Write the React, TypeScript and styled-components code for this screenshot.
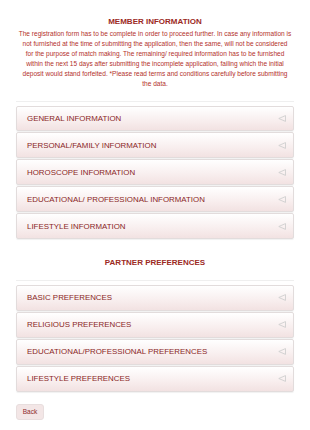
import React from 'react';
import styled, {createGlobalStyle} from 'styled-components';

const GlobalStyle = createGlobalStyle`
    html, body {
        margin: 0;
        padding: 0;
        background: #ffffff;
        font-family: "Liberation Sans", Arial, sans-serif;
    }
`;

const memberSections = [
    'GENERAL INFORMATION',
    'PERSONAL/FAMILY INFORMATION',
    'HOROSCOPE INFORMATION',
    'EDUCATIONAL/ PROFESSIONAL INFORMATION',
    'LIFESTYLE INFORMATION',
];

const partnerSections = [
    'BASIC PREFERENCES',
    'RELIGIOUS PREFERENCES',
    'EDUCATIONAL/PROFESSIONAL PREFERENCES',
    'LIFESTYLE PREFERENCES',
];

const Arrow: React.FC = () => (
    <ArrowIcon width="8" height="7" viewBox="0 0 8 7">
        <path d="M7.5 0.6 L0.8 3.5 L7.5 6.4 Z" fill="none" stroke="#cfcfcf" strokeWidth="0.9" strokeLinejoin="round"/>
    </ArrowIcon>
);

const App: React.FC = () => {
    return (
        <Page>
            <GlobalStyle/>
            <SectionTitle>MEMBER INFORMATION</SectionTitle>
            <Notice>
                The registration form has to be complete in order to proceed further. In case any information is<br/>
                not furnished at the time of submitting the application, then the same, will not be considered<br/>
                for the purpose of match making. The remaining/ required information has to be furnished<br/>
                within the next 15 days after submitting the incomplete application, failing which the initial<br/>
                deposit would stand forfeited. *Please read terms and conditions carefully before submitting<br/>
                the data.
            </Notice>
            <Divider $top={11}/>
            <List>
                {memberSections.map((name) => (
                    <Item key={name}>
                        <Label>{name}</Label>
                        <Arrow/>
                    </Item>
                ))}
            </List>

            <SectionTitle $top={19}>PARTNER PREFERENCES</SectionTitle>
            <Divider $top={12}/>
            <List>
                {partnerSections.map((name) => (
                    <Item key={name}>
                        <Label>{name}</Label>
                        <Arrow/>
                    </Item>
                ))}
            </List>

            <BackButton>Back</BackButton>
        </Page>
    );
};

const Page = styled.div`
    width: 310px;
    box-sizing: border-box;
    padding: 0 16px 12px;
`;

const SectionTitle = styled.h2<{ $top?: number }>`
    margin: ${(p) => p.$top ?? 17}px 0 0;
    font-size: 8px;
    line-height: 10px;
    font-weight: bold;
    color: #9c2a24;
    text-align: center;
`;

const Notice = styled.p`
    margin: 2px 0 0;
    font-size: 6.55px;
    line-height: 10.1px;
    color: #b3322c;
    text-align: center;
    white-space: nowrap;
`;

const Divider = styled.div<{ $top: number }>`
    margin-top: ${(p) => p.$top}px;
    height: 1px;
    background: #efefef;
`;

const List = styled.div`
    margin-top: 4px;
    display: flex;
    flex-direction: column;
    gap: 1px;
`;

const Item = styled.div`
    height: 25.9px;
    box-sizing: border-box;
    display: flex;
    align-items: center;
    justify-content: space-between;
    padding: 0 7px 0 10px;
    border: 1px solid #e2dcdc;
    border-radius: 2px;
    background: linear-gradient(to bottom, #ffffff 0%, #f8eeee 60%, #f2e2e2 100%);
    box-shadow: 0 1px 1px rgba(0, 0, 0, 0.06);
`;

const Label = styled.span`
    font-size: 7.9px;
    color: #8a2626;
    white-space: nowrap;
`;

const ArrowIcon = styled.svg`
    display: block;
    flex-shrink: 0;
`;

const BackButton = styled.button`
    display: block;
    margin-top: 12px;
    width: 28px;
    height: 16px;
    padding: 0;
    border: 1px solid #e8dede;
    border-radius: 3px;
    background: #f3e6e6;
    font-family: "Liberation Sans", Arial, sans-serif;
    font-size: 6.5px;
    color: #8c2a2a;
    cursor: pointer;
`;

export default App;
